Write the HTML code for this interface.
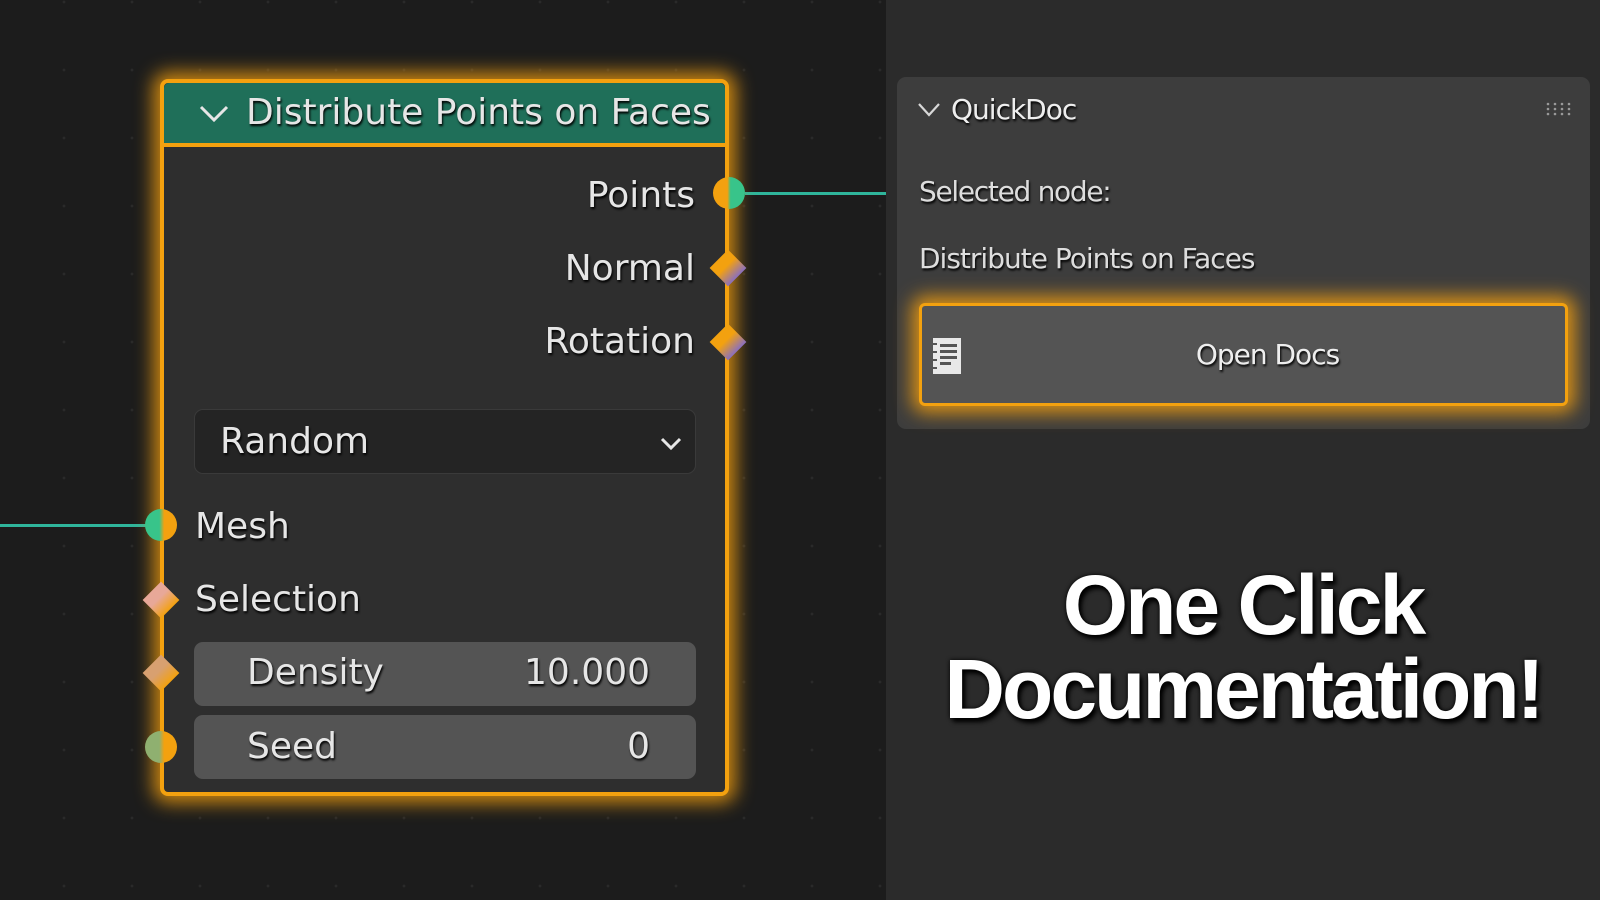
<!DOCTYPE html>
<html><head><meta charset="utf-8"><style>
*{margin:0;padding:0;box-sizing:border-box}
body{width:1600px;height:900px;overflow:hidden;background:#1c1c1c;font-family:"DejaVu Sans","Liberation Sans",sans-serif;color:#e6e6e6;position:relative}
.left{position:absolute;left:0;top:0;width:886px;height:900px;background-color:#1c1c1c;background-image:radial-gradient(circle,#2a2a2a 1.2px,transparent 1.6px);background-size:68px 68px;background-position:30px 36px}
.right{position:absolute;left:886px;top:0;width:714px;height:900px;background:#2b2b2b}
.t{position:absolute;white-space:nowrap;text-shadow:1px 2px 2px #000;line-height:1}
.node{position:absolute;left:160px;top:79px;width:569px;height:717px;background:#2e2e2e;border:4px solid #f3a10f;border-radius:8px;box-shadow:0 0 18px 7px rgba(245,160,15,.8)}
.hdr{position:absolute;left:0;top:0;right:0;height:64px;background:#1f6f59;border-bottom:4px solid #f3a10f;border-radius:5px 5px 0 0}
.field{position:absolute;left:30px;width:502px;height:64px;background:#545454;border-radius:9px}
.sock{position:absolute;width:32px;height:32px;border-radius:50%;background:linear-gradient(90deg,#f3a10f 45%,#38c48a 55%)}
.dia{position:absolute;width:26px;height:26px;transform:rotate(45deg);background:linear-gradient(45deg,#f3a10f 45%,#8a6fc0)}
.panel{position:absolute;left:897px;top:77px;width:693px;height:352px;background:#3d3d3d;border-radius:9px}
.btn{position:absolute;left:919px;top:303px;width:649px;height:103px;background:#545454;border-radius:6px;border:3px solid #f3a10f;box-shadow:0 0 18px 7px rgba(245,160,15,.85)}
.big{position:absolute;left:886px;width:714px;text-align:center;font-family:"Liberation Sans",sans-serif;font-weight:bold;font-size:84px;letter-spacing:-3px;color:#fff;text-shadow:3px 4px 5px #000,0 0 4px #000;line-height:1}
</style></head><body>
<div class="left"></div>
<div class="right"></div>
<div style="position:absolute;left:0;top:524px;width:150px;height:3px;background:#2fb59b"></div>
<div style="position:absolute;left:745px;top:192px;width:141px;height:3px;background:#2fb59b"></div>

<div class="node">
 <div class="hdr">
  <svg style="position:absolute;left:34px;top:20px" width="32" height="22" viewBox="0 0 32 22"><path d="M3 4 L16 17 L29 4" stroke="#e6e6e6" stroke-width="3" fill="none"/></svg>
  <div class="t" style="left:82px;top:12px;font-size:36px">Distribute Points on Faces</div>
 </div>
 <div class="t" style="right:30px;top:95px;font-size:36px">Points</div>
 <div class="t" style="right:30px;top:168px;font-size:36px">Normal</div>
 <div class="t" style="right:30px;top:241px;font-size:36px">Rotation</div>
 <div style="position:absolute;left:30px;top:326px;width:502px;height:65px;background:#242424;border:1px solid #3a3a3a;border-radius:9px">
  <div class="t" style="left:25px;top:14px;font-size:36px">Random</div>
  <svg style="position:absolute;right:12px;top:26px" width="24" height="16" viewBox="0 0 24 16"><path d="M3 3 L12 12 L21 3" stroke="#e6e6e6" stroke-width="3" fill="none"/></svg>
 </div>
 <div class="t" style="left:31px;top:426px;font-size:36px">Mesh</div>
 <div class="t" style="left:31px;top:499px;font-size:36px">Selection</div>
 <div class="field" style="top:559px"><div class="t" style="left:53px;top:13px;font-size:36px">Density</div><div class="t" style="right:46px;top:13px;font-size:36px">10.000</div></div>
 <div class="field" style="top:632px"><div class="t" style="left:53px;top:14px;font-size:36px">Seed</div><div class="t" style="right:46px;top:14px;font-size:36px">0</div></div>
</div>
<div class="sock" style="left:713px;top:177px"></div>
<div class="dia" style="left:715px;top:255px;background:linear-gradient(90deg,#f3a10f 40%,#8a6fc0)"></div>
<div class="dia" style="left:715px;top:329px;background:linear-gradient(90deg,#f3a10f 40%,#8a6fc0)"></div>
<div class="sock" style="left:145px;top:509px;background:linear-gradient(90deg,#38c48a 45%,#f3a10f 60%)"></div>
<div class="dia" style="left:148px;top:587px;background:linear-gradient(90deg,#e8a898 40%,#f3a10f)"></div>
<div class="dia" style="left:148px;top:660px;background:linear-gradient(90deg,#d8a070 40%,#f3a10f)"></div>
<div class="sock" style="left:145px;top:731px;background:linear-gradient(90deg,#8fb070 45%,#f3a10f 60%)"></div>

<div class="panel"></div>
<svg style="position:absolute;left:917px;top:102px" width="24" height="16" viewBox="0 0 24 16"><path d="M2 2 L12 13 L22 2" stroke="#d8d8d8" stroke-width="2.2" fill="none"/></svg>
<div class="t" style="left:951px;top:96px;font-size:28px;letter-spacing:-1px;color:#eee">QuickDoc</div>
<svg style="position:absolute;left:1546px;top:102px" width="28" height="14"><g fill="#9a9a9a"><circle cx="2" cy="2" r="1.3"/><circle cx="9" cy="2" r="1.3"/><circle cx="16" cy="2" r="1.3"/><circle cx="23" cy="2" r="1.3"/><circle cx="2" cy="7" r="1.3"/><circle cx="9" cy="7" r="1.3"/><circle cx="16" cy="7" r="1.3"/><circle cx="23" cy="7" r="1.3"/><circle cx="2" cy="12" r="1.3"/><circle cx="9" cy="12" r="1.3"/><circle cx="16" cy="12" r="1.3"/><circle cx="23" cy="12" r="1.3"/></g></svg>
<div class="t" style="left:919px;top:178px;font-size:28px;letter-spacing:-1.3px;color:#ddd">Selected node:</div>
<div class="t" style="left:919px;top:245px;font-size:28px;letter-spacing:-1px;color:#ddd">Distribute Points on Faces</div>
<div class="btn">
 <svg style="position:absolute;left:9px;top:31px" width="32" height="38" viewBox="0 0 32 38"><rect x="2" y="1" width="28" height="36" fill="#e8e8e8"/><g fill="#545454"><rect x="9" y="7" width="17" height="3"/><rect x="9" y="13" width="17" height="3"/><rect x="9" y="19" width="17" height="3"/><rect x="9" y="25" width="11" height="3"/><rect x="2" y="6" width="4" height="2"/><rect x="2" y="14" width="4" height="2"/><rect x="2" y="22" width="4" height="2"/><rect x="2" y="30" width="4" height="2"/></g></svg>
 <div class="t" style="left:0;right:0;text-align:center;top:35px;font-size:28px;letter-spacing:-1px;color:#eee;padding-left:48px">Open Docs</div>
</div>

<div class="big" style="top:563px">One Click</div>
<div class="big" style="top:647px">Documentation!</div>
</body></html>
